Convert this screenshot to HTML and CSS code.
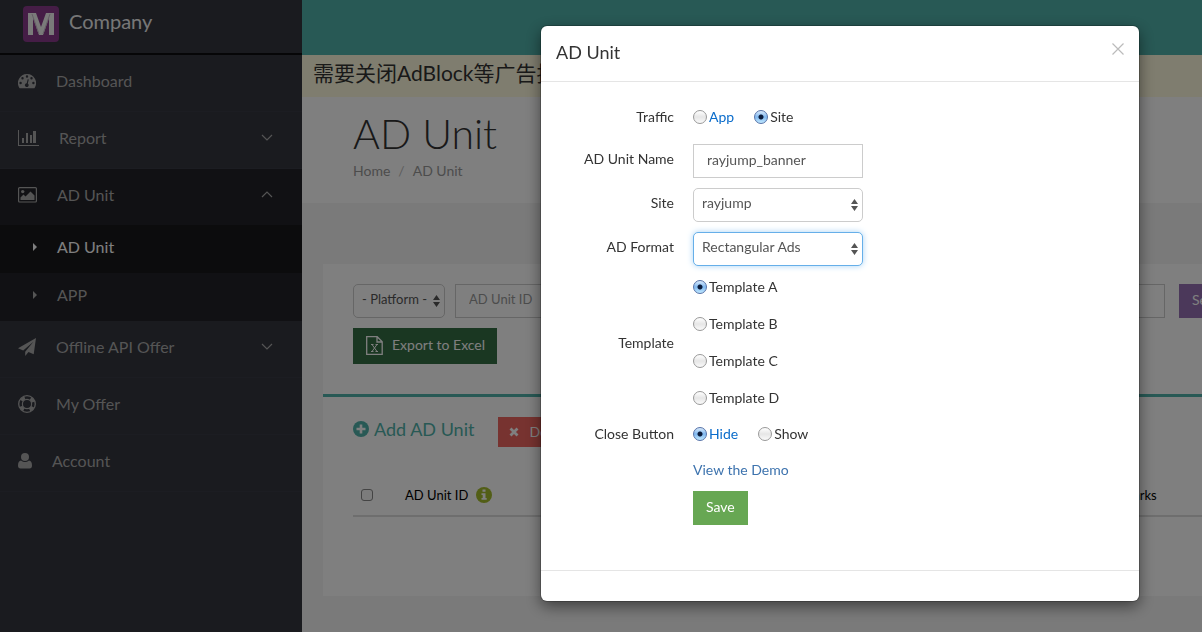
FILE: index.html
```html
<!DOCTYPE html>
<html lang="en">
<head>
<meta charset="utf-8">
<title>AD Unit</title>
<link rel="stylesheet" href="styles.css">
</head>
<body>
<div class="app">
  <aside class="sidebar">
    <div class="brand">
      <svg class="brand-logo" width="36" height="36" viewBox="0 0 36 36" aria-hidden="true"><rect width="36" height="36" rx="4" fill="#8a3a8c"/><path d="M5 29V7h8l5 14 5-14h8v22h-5V12l-6 17h-4l-6-17v17z" fill="#f4f4f4"/><path d="M9 8l7 20M27 8l-7 20" stroke="#c9bccb" stroke-width="1"/></svg>
      <span class="brand-name">Company</span>
    </div>
    <nav class="nav">
      <a class="nav-item" href="#">
        <svg width="18" height="16" viewBox="0 0 18 16" aria-hidden="true"><path fill="currentColor" fill-rule="evenodd" d="M9 1a9 9 0 0 1 7.600 13.900q-.2.300-.6.300H2q-.4 0-.6-.3A9 9 0 0 1 9 1zM9 2.300a1.200 1.200 0 1 0 0 2.400a1.200 1.200 0 1 0 0-2.400zM4.500 4.100a1.200 1.200 0 1 0 0 2.400a1.200 1.200 0 1 0 0-2.400zM13.500 4.100a1.200 1.200 0 1 0 0 2.400a1.200 1.200 0 1 0 0-2.400zM2.600 8.800a1.200 1.200 0 1 0 0 2.400a1.200 1.200 0 1 0 0-2.400zM15.400 8.800a1.200 1.200 0 1 0 0 2.400a1.200 1.200 0 1 0 0-2.400zM9.700 6.200l-1 4.100a1.900 1.900 0 1 0 1.100.3l1-4.100z"/></svg>
        <span>Dashboard</span>
      </a>
      <a class="nav-item" href="#">
        <svg width="21" height="16" viewBox="0 0 21 16" aria-hidden="true"><path fill="currentColor" d="M0 0h1v15h20v1H0zM4 8h2v5H4zM8 3h2v10H8zM12 5h2v8h-2zM15 1h3v12h-3z"/></svg>
        <span>Report</span>
        <svg class="chevron" width="12" height="8" viewBox="0 0 12 8" aria-hidden="true"><path d="M1 1l5 5 5-5" fill="none" stroke="currentColor" stroke-width="1.200"/></svg>
      </a>
      <div class="nav-group">
        <a class="nav-item" href="#">
          <svg width="19" height="16" viewBox="0 0 19 16" aria-hidden="true"><rect x=".6" y=".6" width="17.800" height="14.400" rx="1" fill="none" stroke="currentColor" stroke-width="1.200"/><circle cx="4.700" cy="4.600" r="1.700" fill="currentColor"/><path fill="currentColor" d="M2.500 13v-2.500l3-3 2 2 5-5 4 4V13z"/></svg>
          <span>AD Unit</span>
          <svg class="chevron" width="12" height="8" viewBox="0 0 12 8" aria-hidden="true"><path d="M1 6l5-5 5 5" fill="none" stroke="currentColor" stroke-width="1.200"/></svg>
        </a>
        <a class="nav-sub nav-sub-active" href="#">
          <svg width="4" height="8" viewBox="0 0 4 8" aria-hidden="true"><path d="M0 0l4 4-4 4z" fill="currentColor"/></svg>
          <span>AD Unit</span>
        </a>
        <a class="nav-sub" href="#">
          <svg width="4" height="8" viewBox="0 0 4 8" aria-hidden="true"><path d="M0 0l4 4-4 4z" fill="currentColor"/></svg>
          <span>APP</span>
        </a>
      </div>
      <a class="nav-item" href="#">
        <svg width="18" height="18" viewBox="0 0 18 18" aria-hidden="true"><path fill="currentColor" d="M18 0l-2.300 16.200-5.200-2.200-3.300 4v-4.300L15.400 3.800 5.200 12.500 0 10.300z"/></svg>
        <span>Offline API Offer</span>
        <svg class="chevron" width="12" height="8" viewBox="0 0 12 8" aria-hidden="true"><path d="M1 1l5 5 5-5" fill="none" stroke="currentColor" stroke-width="1.200"/></svg>
      </a>
      <a class="nav-item" href="#">
        <svg width="18" height="18" viewBox="0 0 18 18" fill="none" stroke="currentColor" aria-hidden="true"><circle cx="9" cy="9" r="8.300" stroke-width="1.300"/><circle cx="9" cy="9" r="4.600" stroke-width="1.200"/><circle cx="9" cy="9" r="6.500" stroke-width="3.600" stroke-dasharray="4.200 6.010" stroke-dashoffset="-3"/></svg>
        <span>My Offer</span>
      </a>
      <a class="nav-item" href="#">
        <svg width="14" height="16" viewBox="0 0 14 16" aria-hidden="true"><circle cx="7" cy="4" r="4" fill="currentColor"/><path fill="currentColor" d="M3 7.500q4 3 8 0 3 .6 3 5 0 3-2.500 3h-9Q0 15.500 0 12.500q0-4.400 3-5z"/></svg>
        <span>Account</span>
      </a>
    </nav>
  </aside>
  <main class="main">
    <header class="topbar"></header>
    <p class="notice">需要关闭AdBlock等广告拦截插件</p>
    <section class="page-head">
      <h1 class="page-title">AD Unit</h1>
      <div class="crumbs"><a href="#">Home</a><span class="crumb-sep">/</span><span>AD Unit</span></div>
    </section>
    <section class="panel">
      <div class="filters">
        <div class="filter-row">
          <div class="select-box filter-platform">
            <select class="control select" aria-label="Platform"><option>- Platform -</option></select>
            <svg class="select-arrows" width="7" height="12" viewBox="0 0 7 12" aria-hidden="true"><path d="M0 5l3.500-5L7 5zM0 7l3.500 5L7 7z" fill="currentColor"/></svg>
          </div>
          <input class="control filter-id" type="text" placeholder="AD Unit ID" aria-label="AD Unit ID">
          <input class="control filter-name" type="text" aria-label="Name">
          <button class="button button-search" type="button">Search</button>
        </div>
        <button class="button button-export" type="button">
          <svg width="17" height="19" viewBox="0 0 17 19" fill="none" stroke="currentColor" aria-hidden="true"><path d="M.7.700h10.500l5 5v12.600H.7zM11 .7v5.300h5.300" stroke-width="1.300"/><path d="M6 8.500l5 7M11 8.500l-5 7M5 8.500h2.500M9.500 8.500h2.500M5 15.500h2.500M9.500 15.500h2.500"/></svg>
          Export to Excel
        </button>
      </div>
      <div class="units">
        <div class="unit-actions">
          <a class="add-link" href="#">
            <svg width="16" height="16" viewBox="0 0 16 16" aria-hidden="true"><circle cx="8" cy="8" r="8" fill="currentColor"/><path d="M8 3.500v9M3.500 8h9" stroke="#fff" stroke-width="2.600"/></svg>
            Add AD Unit
          </a>
          <button class="button button-delete" type="button">
            <svg width="10" height="10" viewBox="0 0 10 10" aria-hidden="true"><path d="M1.500 1.500l7 7M8.500 1.500l-7 7" stroke="currentColor" stroke-width="2.800"/></svg>
            Delete
          </button>
        </div>
        <table class="unit-table">
          <thead>
            <tr>
              <th class="col-check"><input class="check" type="checkbox" aria-label="Select all"></th>
              <th class="col-id"><span class="id-head">AD Unit ID <svg width="16" height="16" viewBox="0 0 16 16" aria-hidden="true"><circle cx="8" cy="8" r="8" fill="#a5bd2d"/><path d="M6.500 2.500h3v2.300h-3zM5.500 6.300h4v4.700h1.200v1.800H5.500V11h1.200V8H5.500z" fill="#fff"/></svg></span></th>
              <th class="col-remarks">Remarks</th>
            </tr>
          </thead>
        </table>
      </div>
    </section>
  </main>
</div>

<div class="backdrop">
  <div class="modal" role="dialog" aria-labelledby="modal-title">
    <div class="modal-head">
      <h2 class="modal-title" id="modal-title">AD Unit</h2>
      <button class="modal-close" type="button" aria-label="Close"><svg width="12" height="12" viewBox="0 0 12 12" aria-hidden="true"><path d="M.5.500l11 11M11.500.5l-11 11" stroke="currentColor" stroke-width="1.200"/></svg></button>
    </div>
    <form class="form">
      <span class="label row-field" id="traffic">Traffic</span>
      <div class="choices row-field" role="radiogroup" aria-labelledby="traffic">
        <label class="choice choice-blue"><input class="radio" type="radio" name="traffic">App</label>
        <label class="choice"><input class="radio" type="radio" name="traffic" checked>Site</label>
      </div>
      <label class="label label-field" for="unit-name">AD Unit Name</label>
      <input class="control" id="unit-name" type="text" value="rayjump_banner">
      <label class="label label-field" for="site">Site</label>
      <div class="select-box">
        <select class="control select" id="site"><option>rayjump</option></select>
        <svg class="select-arrows" width="7" height="12" viewBox="0 0 7 12" aria-hidden="true"><path d="M0 5l3.500-5L7 5zM0 7l3.500 5L7 7z" fill="currentColor"/></svg>
      </div>
      <label class="label label-field" for="format">AD Format</label>
      <div class="select-box">
        <select class="control select select-focus" id="format"><option>Rectangular Ads</option></select>
        <svg class="select-arrows" width="7" height="12" viewBox="0 0 7 12" aria-hidden="true"><path d="M0 5l3.500-5L7 5zM0 7l3.500 5L7 7z" fill="currentColor"/></svg>
      </div>
      <span class="label" id="template">Template</span>
      <div class="templates" role="radiogroup" aria-labelledby="template">
        <label class="choice"><input class="radio" type="radio" name="template" checked>Template A</label>
        <label class="choice"><input class="radio" type="radio" name="template">Template B</label>
        <label class="choice"><input class="radio" type="radio" name="template">Template C</label>
        <label class="choice"><input class="radio" type="radio" name="template">Template D</label>
      </div>
      <span class="label row-close" id="close-button">Close Button</span>
      <div class="choices row-close" role="radiogroup" aria-labelledby="close-button">
        <label class="choice choice-blue"><input class="radio" type="radio" name="close" checked>Hide</label>
        <label class="choice"><input class="radio" type="radio" name="close">Show</label>
      </div>
      <a class="demo-link" href="#">View the Demo</a>
      <button class="button button-save" type="button">Save</button>
    </form>
    <div class="modal-foot"></div>
  </div>
</div>
</body>
</html>
```
FILE: styles.css
```css
* { box-sizing: border-box; }
body {
  margin: 0;
  font: 14px/20px Lato, "Noto Sans CJK SC", sans-serif;
  color: #333;
  overflow: hidden;
}
a { color: inherit; text-decoration: none; }
svg { display: block; flex: none; }
button, input, select { font: inherit; }

.app { display: flex; min-height: 100vh; }

.sidebar { flex: 0 0 302px; background: #34363f; color: #aaa; }
.brand {
  display: flex;
  gap: 10px;
  height: 55px;
  padding: 6px 23px 0;
  border-bottom: 2px solid #0c0c0e;
}
.brand-name { font-size: 20px; line-height: 30px; color: #eee; }
.nav-item {
  display: flex;
  align-items: center;
  gap: 20px;
  height: 57px;
  padding: 0 29px 4px 18px;
  border-bottom: 1px solid #393b44;
  font-size: 16px;
}
.chevron { margin-left: auto; }
.nav-group { background: #222228; }
.nav-group .nav-item { height: 56px; border-bottom: 0; }
.nav-sub {
  display: flex;
  align-items: center;
  gap: 20px;
  height: 48px;
  padding: 0 33px 4px;
  font-size: 16px;
}
.nav-sub-active { background: #19191b; color: #fff; }

.main { flex: 1; min-width: 0; overflow: hidden; background: #f4f4f4; }
.topbar { height: 55px; background: #50b2aa; }
.notice {
  height: 42px;
  margin: 0;
  padding: 0 11px;
  background: #fffbde;
  font-size: 21px;
  line-height: 36px;
  white-space: nowrap;
}
.page-head { height: 106px; padding: 14px 51px; background: #fff; }
.page-title { margin: 0; font-size: 41px; line-height: 46px; font-weight: 300; color: #333; }
.crumbs { display: flex; gap: 8px; padding-top: 4px; color: #999; }
.crumb-sep { color: #bbb; }

.panel { width: calc(100% + 23px); margin: 61px 0 36px 21px; background: #fff; }
.filters { height: 130px; padding: 20px 0 0 30px; }
.filter-row { display: flex; gap: 10px; margin-bottom: 10px; font-size: 13px; }
.filter-platform { flex: 0 0 92px; }
.filter-id { flex: 0 0 170px; }
.filter-name { flex: 1; min-width: 0; }

.control {
  display: block;
  width: 100%;
  height: 34px;
  padding: 0 13px 4px;
  border: 1px solid #ccc;
  border-radius: 0;
  background: #fff;
  color: #555;
  outline: 0;
}
.control::placeholder { color: #999; opacity: 1; }
.filter-row .filter-id { width: 170px; }
.filter-row .filter-name { width: auto; }
.select-box { position: relative; }
.select { appearance: none; padding: 0 8px 4px; border-radius: 5px; }
.select-focus { border-color: #66afe9; box-shadow: 0 0 6px #a9d3f5; }
.select-arrows { position: absolute; right: 5px; top: 11px; color: #555; pointer-events: none; }

.button {
  display: flex;
  align-items: center;
  height: 34px;
  padding: 0 13px 2px;
  border: 0;
  color: #fff;
}
.button-search { width: 67px; margin-left: 4px; background: #9671b4; font-size: 14px; }
.button-export { gap: 9px; height: 36px; padding: 0 12px 2px 13px; background: #346e45; }
.button-delete { gap: 10px; height: 30px; padding: 0 11px; background: #ee6660; }
.button-save { background: #67a753; justify-self: start; }

.units { height: 202px; padding: 20px 0 0 30px; border-top: 3px solid #50b2aa; }
.unit-actions { display: flex; gap: 24px; }
.add-link { display: flex; align-items: center; gap: 5px; height: 24px; font-size: 18px; color: #50b2aa; }
.unit-table { width: 100%; margin-top: 27px; border-collapse: collapse; font-size: 13px; color: #000; }
.unit-table th { height: 42px; padding: 0; border-bottom: 2px solid #ddd; font-weight: 400; text-align: left; }
.unit-table .col-check { width: 52px; padding-left: 8px; }
.col-remarks { width: 138px; }
.id-head { display: flex; align-items: center; gap: 8px; }
.check {
  display: block;
  appearance: none;
  width: 12px;
  height: 12px;
  margin: 0;
  border: 1px solid #888;
  border-radius: 3px;
  background: #f8f8f8;
}

.backdrop {
  position: fixed;
  inset: 0;
  display: flex;
  justify-content: flex-end;
  align-items: flex-start;
  padding: 26px 63px 0;
  background: rgba(0, 0, 0, .5);
}
.modal {
  width: 598px;
  border-radius: 6px;
  background: #fff;
  box-shadow: 0 5px 15px rgba(0, 0, 0, .5), 0 0 0 1px rgba(0, 0, 0, .2);
}
.modal-head {
  display: flex;
  justify-content: space-between;
  align-items: center;
  height: 56px;
  padding: 0 15px 4px;
  border-bottom: 1px solid #e5e5e5;
}
.modal-title { margin: 0; font-size: 18px; line-height: 24px; font-weight: 400; }
.modal-close { padding: 0 0 5px; border: 0; background: none; color: #bbb; }
.form {
  display: grid;
  grid-template-columns: 118px 170px;
  column-gap: 19px;
  row-gap: 10px;
  align-items: center;
  padding: 18px 15px 45px;
}
.label { text-align: right; }
.label-field { padding-bottom: 4px; }
.choices { display: flex; align-items: center; gap: 20px; }
.row-field { height: 34px; line-height: 34px; }
.row-close { height: 30px; line-height: 30px; }
.choice { display: flex; align-items: center; gap: 2px; line-height: 22px; }
.choice-blue { color: #0a6ccb; }
.templates { display: grid; gap: 15px; }
.radio {
  appearance: none;
  width: 14px;
  height: 14px;
  margin: 0;
  border: 1px solid #999;
  border-radius: 50%;
  background: linear-gradient(#fff, #e6e6e6 50%, #fafafa);
}
.radio:checked {
  border-color: #5672a8;
  background: radial-gradient(circle, #0b1c3c 2px, transparent 3px), linear-gradient(#d9eafb, #80b8f0 50%, #c0e8ff);
}
.demo-link { grid-column: 2; line-height: 22px; color: #3d73ae; }
.button-save { grid-column: 2; }
.modal-foot { height: 31px; border-top: 1px solid #e5e5e5; }
```
